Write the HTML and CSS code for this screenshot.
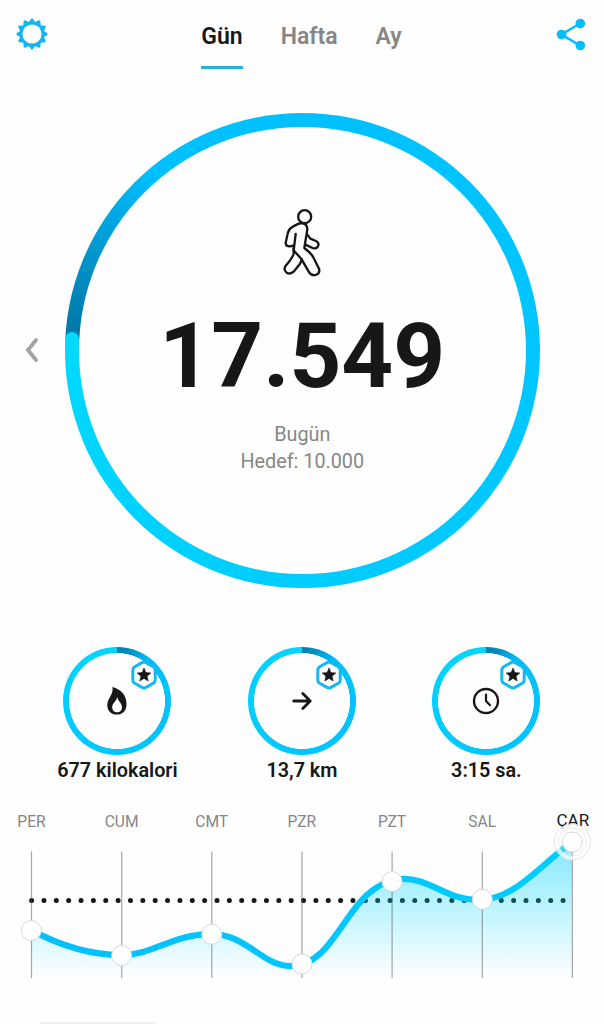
FILE: index.html
```html
<!DOCTYPE html>
<html lang="tr">
<head>
<meta charset="utf-8">
<title>Adımsayar</title>
<link rel="stylesheet" href="styles.css">
</head>
<body>
<svg width="0" height="0" class="defs">
  <symbol id="badge" viewBox="0 0 28 30">
    <path d="M12 2.6Q14 1.5 16 2.6L23.3 6.7Q25.2 7.9 25.2 10V20Q25.2 22.1 23.3 23.3L16 27.4Q14 28.5 12 27.4L4.7 23.3Q2.8 22.1 2.8 20V10Q2.8 7.9 4.7 6.7Z" fill="#fff" stroke="#12b8f0" stroke-width="3"/>
    <path d="M14 8L15.9 12.6L20.8 13L17.1 16.2L18.2 21L14 18.4L9.8 21L10.9 16.2L7.2 13L12.1 12.6Z" fill="#171717" stroke="#171717" stroke-width=".6"/>
  </symbol>
</svg>
<div class="screen">
  <header class="top">
    <svg class="gear" width="32" height="32" viewBox="0 0 32 32">
      <path d="M16 1.200L18.900 5.100L23.400 3.200L23.900 8.100L28.800 8.600L26.900 13.100L30.800 16L26.900 18.900L28.800 23.400L23.900 23.900L23.400 28.800L18.900 26.900L16 30.800L13.100 26.900L8.600 28.800L8.100 23.900L3.200 23.400L5.100 18.900L1.200 16L5.100 13.100L3.200 8.600L8.100 8.100L8.600 3.200L13.100 5.100Z" fill="#12b5f2" stroke="#12b5f2" stroke-width="1.800" stroke-linejoin="round"/>
      <circle cx="16" cy="16" r="9.600" fill="#fff"/>
    </svg>
    <nav class="tabs">
      <span class="tab active">Gün</span>
      <span class="tab">Hafta</span>
      <span class="tab">Ay</span>
    </nav>
    <svg class="share" width="30" height="33" viewBox="0 0 30 33">
      <path d="M24 5.5L5.5 16.5L24 27.5" fill="none" stroke="#00bfff" stroke-width="2.6"/>
      <g fill="#00bfff"><circle cx="24.3" cy="5.5" r="4.8"/><circle cx="5.5" cy="16.5" r="4.8"/><circle cx="24.3" cy="27.5" r="4.8"/></g>
    </svg>
  </header>

  <main class="hero">
    <svg class="prev" width="14" height="26" viewBox="0 0 14 26"><path d="M11 3L3 13L11 23" fill="none" stroke="#a3a3a3" stroke-width="3.8" stroke-linecap="round"/></svg>
    <div class="ring">
      <div class="face">
        <svg class="walker" width="40" height="71.67" viewBox="155 50 120 215" fill="none" stroke="#171717" stroke-width="7" stroke-linecap="round" stroke-linejoin="round">
          <circle cx="223" cy="79" r="19.5"/>
          <path d="M187 166Q185 168 176 168Q166 167 166 157L172 130Q174 117 185 111Q202 100 213 98Q231 99 231 117L222 173Q244 190 250 203L266 235Q270 250 256 254Q242 257 235 244L214 207L190 180L196 131"/>
          <path d="M190 172V190Q188 201 165 228Q159 239 169 247Q180 253 190 244L208 222Q213 214 214 207"/>
          <path d="M231 133L240 145L257 152Q268 158 263 168Q258 177 247 173L225 163"/>
        </svg>
        <div class="steps">17.549</div>
        <div class="goal">Bugün<br>Hedef: 10.000</div>
      </div>
    </div>
  </main>

  <section class="stats">
    <div class="stat">
      <div class="mini">
        <svg width="22" height="30" viewBox="0 0 22 30"><path d="M6.500 1C15 3.500 20.500 9 20.500 18C20.500 25 16.500 28.600 11 28.600C5.200 28.600 1.300 25 1.300 19C1.300 12 7.500 9.500 6.500 1Z" fill="#171717"/><path d="M11.3 11C11.8 15 16 17 16 21.5C16 24.5 14 26.3 11.2 26.3C8.2 26.3 6.2 24.3 6.2 21.3C6.2 17 10.5 15.5 11.3 11Z" fill="#fff"/></svg>
        <svg class="badge" width="28" height="30"><use href="#badge"/></svg>
      </div>
      <div class="value">677 kilokalori</div>
    </div>
    <div class="stat">
      <div class="mini">
        <svg width="20" height="20" viewBox="0 0 20 20"><path d="M1.7 10H18M10.800 2.600L18.200 10L10.800 17.400" fill="none" stroke="#171717" stroke-width="2.8" stroke-linecap="round" stroke-linejoin="round"/></svg>
        <svg class="badge" width="28" height="30"><use href="#badge"/></svg>
      </div>
      <div class="value">13,7 km</div>
    </div>
    <div class="stat">
      <div class="mini">
        <svg width="28" height="28" viewBox="0 0 28 28" fill="none" stroke="#171717" stroke-linecap="round"><circle cx="14" cy="14" r="12" stroke-width="2.4"/><path d="M14 7.5V14L18 18.2" stroke-width="2.2"/></svg>
        <svg class="badge" width="28" height="30"><use href="#badge"/></svg>
      </div>
      <div class="value">3:15 sa.</div>
    </div>
  </section>

  <section class="week">
    <div class="days">
      <span>PER</span><span>CUM</span><span>CMT</span><span>PZR</span><span>PZT</span><span>SAL</span><span class="today">ÇAR</span>
    </div>
    <svg class="chart" width="604" height="160" viewBox="0 820 604 160">
      <defs>
        <linearGradient id="area" gradientUnits="userSpaceOnUse" x1="0" y1="842" x2="0" y2="978">
          <stop offset="0" stop-color="#00d0ff" stop-opacity=".48"/>
          <stop offset=".5" stop-color="#00d8ff" stop-opacity=".25"/>
          <stop offset="1" stop-color="#00d8ff" stop-opacity="0"/>
        </linearGradient>
        <linearGradient id="line" x1="0" x2="1" y1="0" y2="0">
          <stop offset="0" stop-color="#00bfff"/><stop offset="1" stop-color="#00cdff"/>
        </linearGradient>
      </defs>
      <path d="M31.6 900.5H565" stroke="#171717" stroke-width="5" stroke-linecap="round" stroke-dasharray="0 12.36" fill="none"/>
      <path d="M31 930C61 946 91 955 121 955C152 956 172 934 211 934C247 934 262 966 290 966C340 966 345 885 400 879C430 877 445 900 478 900C515 900 540 865 572 842V978H31Z" fill="url(#area)"/>
      <path d="M31 930C61 946 91 955 121 955C152 956 172 934 211 934C247 934 262 966 290 966C340 966 345 885 400 879C430 877 445 900 478 900C515 900 540 865 572 842" fill="none" stroke="url(#line)" stroke-width="6.2"/>
      <path d="M31.5 851.500V978M121.700 851.500V978M211.800 851.500V978M302 851.500V978M392.100 851.500V978M482.300 851.500V978M572.400 851.500V978" stroke="#505050" stroke-opacity=".5" stroke-width="1.2"/>
      <g fill="#fff" stroke="#d6dadc" stroke-width="1">
        <circle cx="31.300" cy="930.500" r="10"/><circle cx="121.600" cy="955.500" r="10"/><circle cx="211.800" cy="934.300" r="10"/><circle cx="302" cy="964" r="10"/><circle cx="392" cy="881.500" r="10"/><circle cx="482.300" cy="899.300" r="10"/>
        <circle cx="572.300" cy="842" r="16" fill="none" stroke="#fff" stroke-width="4" stroke-opacity=".75"/>
        <circle cx="572.300" cy="842" r="14.200" fill="#fff" fill-opacity=".2" stroke="#e2e2e2" stroke-opacity=".7"/>
        <circle cx="572.300" cy="842" r="18" fill="none" stroke="#e4e4e4"/>
        <circle cx="572.300" cy="842" r="10"/>
      </g>
    </svg>
  </section>
  <div class="handle"></div>
</div>
</body>
</html>
```
FILE: styles.css
```css
* { box-sizing: border-box; }
body { margin: 0; background: #fefefe; font-family: Roboto, "Liberation Sans", sans-serif; color: #171717; }
svg { display: block; }
.defs { position: absolute; }
.screen { width: 604px; height: 1024px; overflow: hidden; display: flex; flex-direction: column; }

.top { height: 112px; display: flex; align-items: flex-start; padding: 18px 18px 0 16px; }
.tabs { display: flex; gap: 38px; margin-left: 153.300px; }
.tab { font-size: 23px; line-height: 37px; font-weight: 600; color: #868686; height: 51px; }
.tab.active { color: #171717; border-bottom: 3.500px solid #27aee0; }
.share { margin-left: auto; }

.hero { height: 476px; display: flex; align-items: center; padding-left: 25px; }
.prev { margin-right: 26px; }
.ring { position: relative; width: 474.500px; height: 475px; padding: 14px; border-radius: 50%;
  background: conic-gradient(#00c0ff 0deg, #00c6ff 90deg, #00ccff 180deg, #00d8ff 265deg, #00daff 272.500deg, #0076a5 272.600deg, #0084b5 283deg, #00a2dc 302deg, #00c0ff 320deg, #00c0ff 360deg); }
.ring::after { content: ""; position: absolute; left: 0; top: 219.500px; width: 14px; height: 14px; border-radius: 50%; background: #00daff; }
.face { height: 447px; border-radius: 50%; background: #fefefe; display: flex; flex-direction: column; align-items: center; padding-top: 80px; }
.walker { margin-right: 1px; }
.steps { font-size: 90.500px; line-height: 100px; font-weight: 700; margin-top: 28px; }
.goal { font-size: 19.800px; line-height: 27px; color: #868686; text-align: center; margin-top: 15px; }

.stats { margin-top: 59px; padding: 0 25.200px; display: flex; height: 165px; }
.stat { width: 184.500px; flex: none; display: flex; flex-direction: column; align-items: center; }
.mini { position: relative; width: 108px; height: 108px; border-radius: 50%; display: flex; align-items: center; justify-content: center;
  background: radial-gradient(circle, #fefefe 47.700px, transparent 48.300px), conic-gradient(#007eaf 0deg, #0090c4 15deg, #00b8f4 34deg, #00c2ff 60deg, #00c6ff 180deg, #00d4ff 330deg, #00d4ff 360deg); }
.badge { position: absolute; left: 67px; top: 13px; }
.value { font-size: 19.800px; line-height: 24px; font-weight: 600; margin-top: 4px; white-space: nowrap; }

.week { height: 168px; }
.days { display: grid; grid-template-columns: repeat(7, 90.150px); margin-left: -13.600px; height: 20px; align-items: center; text-align: center; font-size: 15.600px; line-height: 20px; color: #868686; }
.today { color: #171717; font-size: 17px; line-height: 18px; padding-left: 1px; margin-top: -5px; }
.chart { position: relative; margin-top: -12px; }
.handle { width: 116px; height: 2px; margin: auto 0 0 40px; background: #f1f1f1; }
```
